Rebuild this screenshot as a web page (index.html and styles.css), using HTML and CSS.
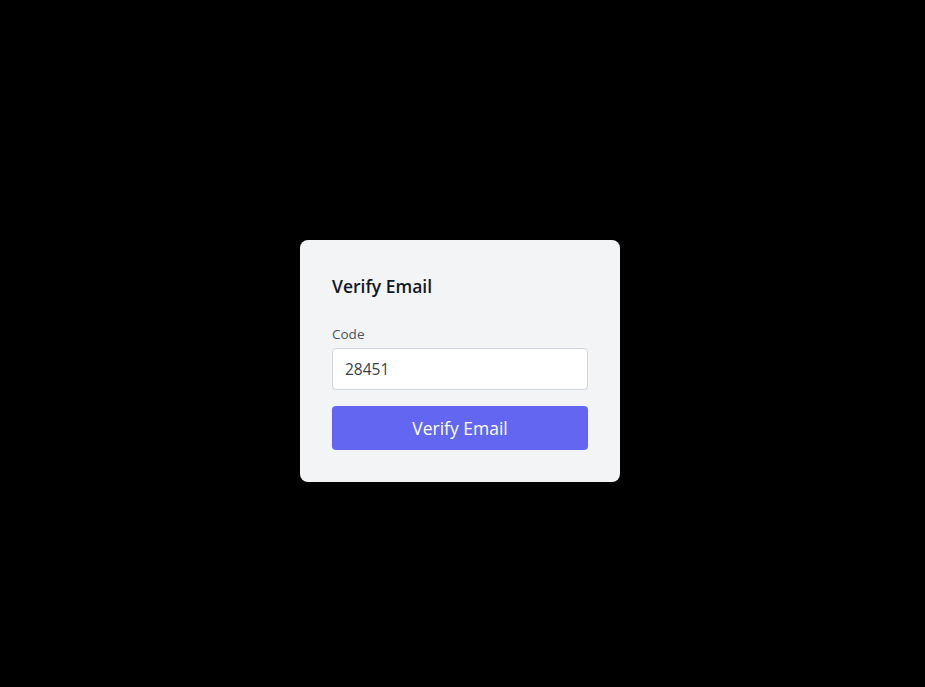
FILE: index.html
```html
<!DOCTYPE html>
<html lang="en">
<head>
<meta charset="utf-8">
<title>Verify Email</title>
<link rel="stylesheet" href="styles.css">
</head>
<body>
<main class="page">
  <form class="card" onsubmit="return false">
    <h1 class="title">Verify Email</h1>
    <label class="label" for="code">Code</label>
    <input class="input" id="code" type="text" value="28451">
    <button class="button" type="submit">Verify Email</button>
  </form>
</main>
</body>
</html>
```
FILE: styles.css
```css
* { box-sizing: border-box; }
html, body { margin: 0; padding: 0; background: #000; }
body { font-family: "Open Sans", "Noto Sans", sans-serif; }
.page {
  min-height: 100vh;
  display: flex;
  align-items: center;
  justify-content: center;
  padding: 35px 5px 0 0;
}
.card {
  width: 320px;
  background: #f3f4f6;
  border-radius: 8px;
  padding: 32px;
  display: flex;
  flex-direction: column;
}
.title {
  margin: 0;
  font-size: 17.5px;
  line-height: 28px;
  font-weight: 600;
  color: #111827;
}
.label {
  margin-top: 24px;
  font-size: 13.5px;
  line-height: 20px;
  color: #4b5563;
}
.input {
  margin-top: 4px;
  height: 42px;
  border: 1px solid #d1d5db;
  border-radius: 4px;
  background: #fff;
  padding: 0 12px;
  font-family: inherit;
  font-size: 15.5px;
  color: #374151;
  outline: none;
}
.button {
  margin-top: 16px;
  height: 44px;
  border: 0;
  border-radius: 4px;
  background: #6366f1;
  color: #fff;
  font-family: inherit;
  font-size: 17.5px;
  cursor: pointer;
}
```
